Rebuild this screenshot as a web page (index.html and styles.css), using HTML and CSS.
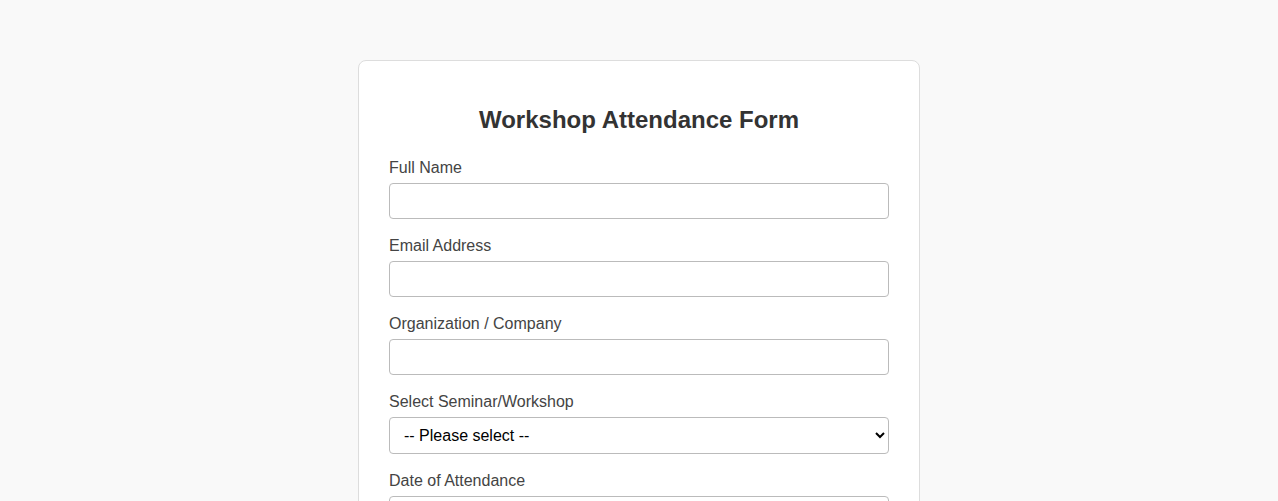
FILE: index.html
```html
<!DOCTYPE html>
<html lang="en">
<head>
    <meta charset="UTF-8">
    <meta name="viewport" content="width=device-width, initial-scale=1.0">
    <title>Workshop Attendance Form</title>
    <link rel="stylesheet" href="styles.css">
</head>
<body>
    <div class="form-container">
        <h2>Workshop Attendance Form</h2>
        <form>
            <div class="form-group">
                <label for="fullname">Full Name</label>
                <input type="text" id="fullname" name="fullname">
            </div>
            <div class="form-group">
                <label for="email">Email Address</label>
                <input type="email" id="email" name="email">
            </div>
            <div class="form-group">
                <label for="organization">Organization / Company</label>
                <input type="text" id="organization" name="organization">
            </div>
            <div class="form-group">
                <label for="workshop">Select Seminar/Workshop</label>
                <select id="workshop" name="workshop">
                    <option value="">-- Please select --</option>
                    <option value="ai">Intro to AI</option>
                    <option value="web">Modern Web Development</option>
                    <option value="data">Data Analysis Basics</option>
                </select>
            </div>
            <div class="form-group">
                <label for="date">Date of Attendance</label>
                <input type="date" id="date" name="date">
            </div>
            <div class="form-group">
                <label for="comments">Comments</label>
                <textarea id="comments" name="comments" rows="4"></textarea>
            </div>
            <button type="submit" class="submit-btn">Submit Attendance</button>
        </form>
    </div>
</body>
</html>
```

FILE: styles.css
```css
body {
    font-family: "Liberation Sans", Arial, sans-serif;
    margin: 0;
    padding: 60px 20px;
    background: #f9f9f9;
}

.form-container {
    max-width: 500px;
    margin: 0 auto;
    padding: 30px;
    background: #fff;
    border: 1px solid #ddd;
    border-radius: 8px;
}

h2 {
    text-align: center;
    color: #333;
    font-size: 24px;
    margin: 15px 0 25px;
}

.form-group {
    margin-bottom: 18px;
}

.form-group label {
    display: block;
    margin-bottom: 6px;
    color: #444;
    font-size: 16px;
}

.form-group input,
.form-group select,
.form-group textarea {
    display: block;
    width: 100%;
    box-sizing: border-box;
    padding: 8px 10px;
    font-family: inherit;
    font-size: 16px;
    border: 1px solid #bbb;
    border-radius: 4px;
    background: #fff;
}

.form-group select {
    height: 37px;
}

.submit-btn {
    width: 100%;
    padding: 12px;
    font-size: 16px;
    color: #fff;
    background: #4a7bd0;
    border: none;
    border-radius: 4px;
    cursor: pointer;
}
```
